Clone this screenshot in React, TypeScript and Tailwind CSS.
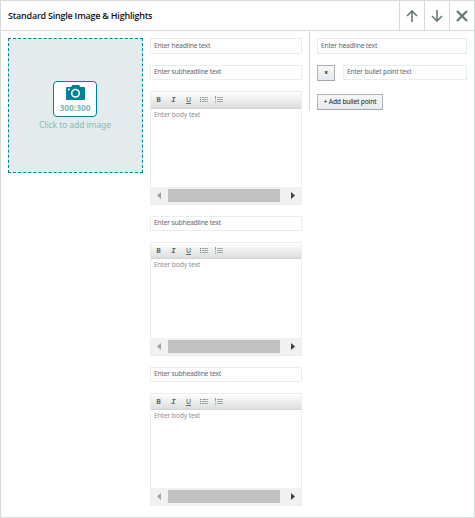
import React from "react";
import { clsx } from "clsx";

function Field({ text, className }: { text: string; className?: string }) {
  return (
    <div
      className={clsx(
        "flex shrink-0 items-center border border-[#eaeded] bg-white pl-[3px] text-[6.7px] leading-none tracking-[-0.17px] text-[#66666c]",
        className,
      )}
    >
      <span className="whitespace-nowrap">{text}</span>
    </div>
  );
}

function ListIcon({ numbered }: { numbered?: boolean }) {
  return (
    <svg width="8" height="7" viewBox="0 0 8 7" shapeRendering="crispEdges">
      <path d="M2 1h6v1H2zM2 3h6v1H2zM2 5h6v1H2z" fill="#a2a9a9" />
      {numbered ? (
        <path d="M0 0h1v3H0zM0 4h1v1H0zM0 6h1v1H0z" fill="#939b9b" />
      ) : (
        <path d="M0 1h1v1H0zM0 3h1v1H0zM0 5h1v1H0z" fill="#687778" />
      )}
    </svg>
  );
}

function Editor({ className, toolbar }: { className?: string; toolbar: string }) {
  return (
    <div className={clsx("flex shrink-0 flex-col border border-[#eaeded] bg-white", className)}>
      <div
        className={clsx(
          "flex shrink-0 items-start border-b border-[#d0d6d6] bg-linear-to-b from-white to-[#dcdddd] pt-[4px] pl-[3px] text-[7px] leading-[7px] text-[#5c6a6b]",
          toolbar,
        )}
      >
        <span className="flex w-[9px] justify-center font-bold">B</span>
        <span className="ml-[6px] flex w-[9px] justify-center font-['Liberation_Mono',monospace] text-[8px] font-bold italic">I</span>
        <span className="ml-[6px] flex w-[9px] justify-center">
          <span className="border-b border-[#5c6a6b] leading-[7px] font-medium">U</span>
        </span>
        <span className="ml-[6px] flex w-[9px] justify-center"><ListIcon /></span>
        <span className="ml-[6px] flex w-[9px] justify-center"><ListIcon numbered /></span>
      </div>
      <div className="grow pt-[2px] pl-[3px] text-[6.7px] leading-[8px] tracking-[-0.12px] text-[#879596]">Enter body text</div>
      <div className="flex h-[17px] shrink-0 items-center bg-[#f1f1f1] pr-[6px] pl-[6px]">
        <svg width="4" height="7" viewBox="0 0 4 7"><path d="M4 0V7L0 3.5Z" fill="#a3a3a3" /></svg>
        <div className="ml-[7px] h-[13px] w-[112px] bg-[#c1c1c1]" />
        <svg className="ml-auto" width="4" height="7" viewBox="0 0 4 7"><path d="M0 0V7L4 3.5Z" fill="#404040" /></svg>
      </div>
    </div>
  );
}

function HeaderButton({ path, bold }: { path: string; bold?: boolean }) {
  return (
    <button className="flex w-[25px] items-center justify-center border-l border-[#d5dbdb]">
      <svg width="12" height="12" viewBox="0 0 12 12" fill="none" stroke="#687778" strokeWidth={bold ? 2.2 : 1.6}>
        <path d={path} />
      </svg>
    </button>
  );
}

const button =
  "flex h-4 items-center justify-center rounded-[1px] border border-[#adb1b8] border-b-[#a2a6ac] bg-linear-to-b from-[#f7f8fa] to-[#e7e9ec] text-[6.7px] leading-none tracking-[-0.17px] text-[#222]";

export default function App() {
  return (
    <div className="flex h-[518px] w-[475px] flex-col overflow-hidden border border-[#d5dbdb] bg-white font-['Noto_Sans',sans-serif]">
      <header className="flex h-[30px] shrink-0 border-b border-[#d5dbdb]">
        <h1 className="grow self-center pb-[1px] pl-[7px] font-['Open_Sans',sans-serif] text-[9px] leading-none font-semibold tracking-[-0.23px] whitespace-nowrap text-[#111]">
          Standard Single Image &amp; Highlights
        </h1>
        <HeaderButton path="M6 12V1M1 6L6 1L11 6" />
        <HeaderButton path="M6 0V11M1 6L6 11L11 6" />
        <HeaderButton path="M1 1L11 11M11 1L1 11" bold />
      </header>
      <main className="flex grow items-start pl-[7px]">
        <div className="mt-[7px] flex h-[135px] w-[135px] shrink-0 flex-col items-center border border-dashed border-[#008296] bg-[#e3ebec] pt-[42px] pr-px">
          <div className="flex h-9 w-11 flex-col items-center rounded-[4px] border border-[#008296] bg-white pt-[3px]">
            <svg width="19" height="15" viewBox="0 0 19 15">
              <path d="M1 2H5L6.5 0H13L14.5 2H18Q19 2 19 3V14Q19 15 18 15H1Q0 15 0 14V3Q0 2 1 2Z" fill="#008296" />
              <circle cx="9.5" cy="8.3" r="3.8" fill="none" stroke="white" strokeWidth="1.5" />
              <circle cx="2.8" cy="4.4" r="1" fill="white" />
            </svg>
            <span className="mt-[3px] text-[8.5px] leading-[10px] font-bold tracking-[-0.1px] text-[#7fb9b8]">300:300</span>
          </div>
          <span className="mt-[3px] text-[8.5px] leading-[10px] tracking-[-0.08px] whitespace-nowrap text-[#84bbba]">Click to add image</span>
        </div>
        <div className="mt-[7px] ml-[7px] flex w-[152px] shrink-0 flex-col gap-[11px]">
          <Field text="Enter headline text" className="h-4" />
          <Field text="Enter subheadline text" className="h-[15px]" />
          <Editor className="h-[114px]" toolbar="h-[17px]" />
          <Field text="Enter subheadline text" className="h-[15px]" />
          <Editor className="h-[114px]" toolbar="h-4" />
          <Field text="Enter subheadline text" className="h-[15px]" />
          <Editor className="h-[113px]" toolbar="h-4" />
        </div>
        <div className="ml-[7px] flex h-[79px] grow flex-col border-l border-[#d5dbdb] pt-[7px] pr-[7px] pl-[7px]">
          <Field text="Enter headline text" className="h-4" />
          <div className="mt-[11px] flex items-start gap-2">
            <button className={clsx(button, "w-[18px] font-bold")}>×</button>
            <Field text="Enter bullet point text" className="h-[15px] grow" />
          </div>
          <button className={clsx(button, "mt-[13px] w-[66px] shrink-0 whitespace-nowrap")}>+ Add bullet point</button>
        </div>
      </main>
    </div>
  );
}
